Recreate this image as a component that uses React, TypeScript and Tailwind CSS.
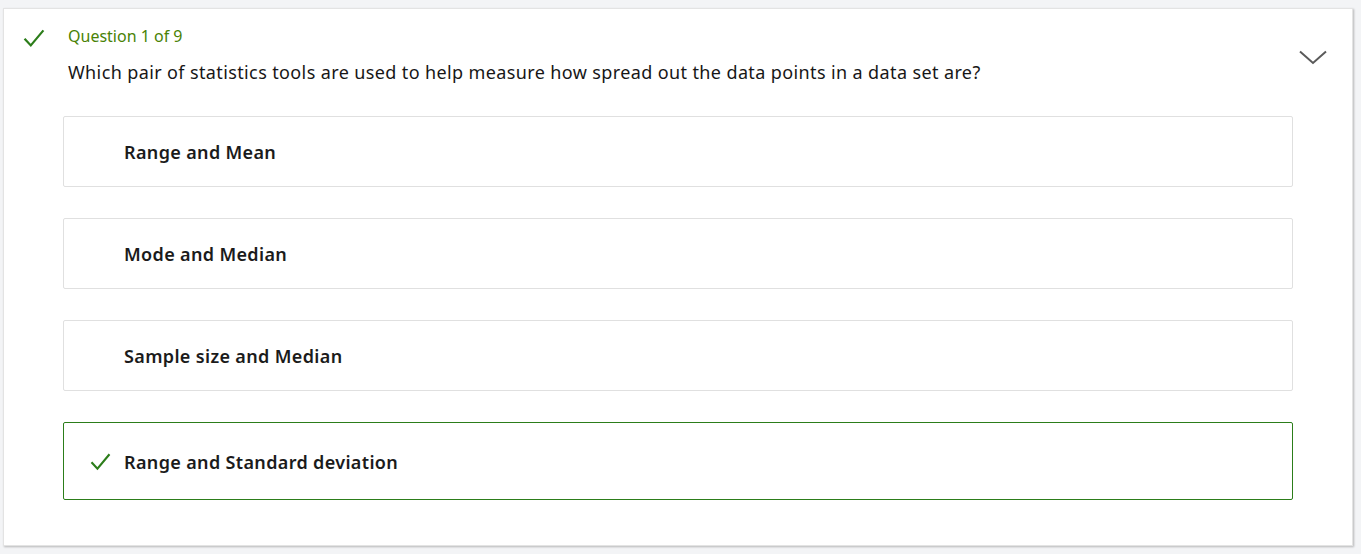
const options = [
  { label: "Range and Mean", correct: false },
  { label: "Mode and Median", correct: false },
  { label: "Sample size and Median", correct: false },
  { label: "Range and Standard deviation", correct: true },
]

function CheckMark({ className }: { className?: string }) {
  return (
    <svg viewBox="0 0 24 24" className={className} fill="none" stroke="currentColor" strokeWidth={2.4} strokeLinecap="square">
      <path d="M2.5 12.5 L8.5 19 L21.5 3.5" />
    </svg>
  )
}

function Chevron() {
  return (
    <svg width="28" height="15" viewBox="0 0 28 15" fill="none" stroke="#5a5a5a" strokeWidth={2}>
      <path d="M1 1.5 L14 13 L27 1.5" />
    </svg>
  )
}

export default function App() {
  return (
    <div className="min-h-[554px] w-[1361px] bg-[#f3f4f6] pt-[8px] pl-[3px]" style={{ fontFamily: '"Noto Sans", "Open Sans", sans-serif' }}>
      <div className="w-[1350px] h-[538px] bg-white border border-[#e3e3e3] shadow-[1px_1px_2px_rgba(0,0,0,0.25)] flex">
        <div className="w-[59px] shrink-0 pl-[18px] pt-[19px]">
          <CheckMark className="w-[24px] h-[22px] text-[#2c7d1a]" />
        </div>

        <div className="w-[1230px] shrink-0">
          <div className="pl-[5px] pt-[16px]">
            <div className="text-[16px] leading-[22px] text-[#498205]">Question 1 of 9</div>
            <div className="mt-[13px] text-[18px] leading-[24px] tracking-[0.38px] text-[#171717]">
              Which pair of statistics tools are used to help measure how spread out the data points in a data set are?
            </div>
          </div>

          <div className="mt-[32px] flex flex-col gap-[31px]">
            {options.map((o) => (
              <div
                key={o.label}
                className={
                  o.correct
                    ? "h-[78px] rounded-[2px] border border-[#2c7d1a] flex items-center pt-[2px]"
                    : "h-[71px] rounded-[2px] border border-[#e0e0e0] flex items-center pt-[2px]"
                }
              >
                <div className="w-[60px] shrink-0 flex justify-end pr-[12px]">
                  {o.correct && <CheckMark className="w-[23px] h-[21px] text-[#2c7d1a]" />}
                </div>
                <span className="text-[18px] font-semibold tracking-[0.35px] text-[#1b1b1b]">{o.label}</span>
              </div>
            ))}
          </div>
        </div>

        <div className="flex-1 pl-[6px] pt-[41px]">
          <Chevron />
        </div>
      </div>
    </div>
  )
}
